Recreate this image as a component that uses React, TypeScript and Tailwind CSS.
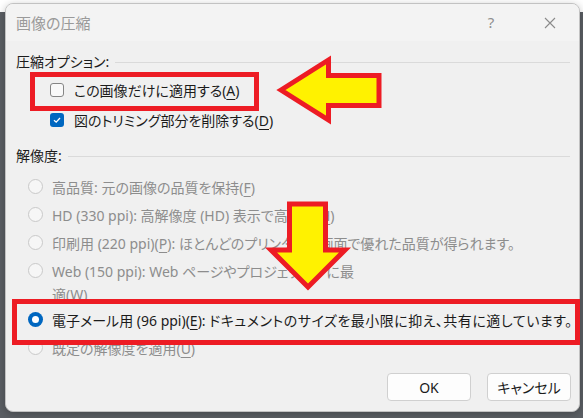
import React from 'react';

const font = "font-['Noto_Sans','Noto_Sans_CJK_JP',sans-serif] [font-feature-settings:'palt']";

const Key = ({ children }: { children: React.ReactNode }) => (
  <span className="underline underline-offset-[3px] decoration-1">{children}</span>
);

const GroupLabel = ({ children }: { children: React.ReactNode }) => (
  <div className="flex items-center h-[20px] pl-[10px] pr-[9px]">
    <span className="text-[14px] leading-[20px] text-[#1b1b1b]">{children}</span>
    <div className="flex-1 h-px bg-[#dadada] ml-[6px]" />
  </div>
);

const Checkbox = ({ checked }: { checked?: boolean }) =>
  checked ? (
    <span className="w-[14px] h-[14px] rounded-[3px] bg-[#0067c0] flex items-center justify-center shrink-0">
      <svg width="10" height="10" viewBox="0 0 10 10">
        <polyline points="2,5.2 4.2,7.2 8,3" fill="none" stroke="#fff" strokeWidth="1.3" />
      </svg>
    </span>
  ) : (
    <span className="w-[14px] h-[14px] rounded-[3px] border border-[#858585] bg-[#f9f9f9] shrink-0" />
  );

const Radio = ({ selected }: { selected?: boolean }) =>
  selected ? (
    <span className="w-[15px] h-[15px] rounded-full bg-[#0067c0] flex items-center justify-center shrink-0">
      <span className="w-[7px] h-[7px] rounded-full bg-white" />
    </span>
  ) : (
    <span className="w-[15px] h-[15px] rounded-full border border-[#c9c9c9] bg-[#f6f6f6] shrink-0" />
  );

const RadioRow = ({ selected, children }: { selected?: boolean; children: React.ReactNode }) => (
  <div className="flex items-start pl-[22px] min-h-[28px] pt-[6.5px]">
    <Radio selected={selected} />
    <span
      className={
        'ml-[9px] -mt-[3px] text-[14px] leading-[23px] whitespace-nowrap ' +
        (selected ? 'text-[#1b1b1b]' : 'text-[#8d8d8d]')
      }
    >
      {children}
    </span>
  </div>
);

export default function App() {
  return (
    <div
      className={`relative w-[583px] h-[418px] overflow-hidden bg-[linear-gradient(to_bottom,#ffffff_0px,#ffffff_12px,#5b5f64_12px)] pt-[3px] pl-[5px] ${font}`}
    >
      <div className="w-[575px] h-[409px] rounded-[8px] border border-[#c2c2c2] shadow-[0_2px_8px_rgba(0,0,0,0.25)] overflow-hidden flex flex-col bg-[#f0f0f0]">
        {/* title bar */}
        <div className="h-[37px] bg-[#f3f3f3] flex items-center pl-[10px] pr-[9px]">
          <span className="text-[15px] text-[#9a9a9a] mt-[2px]">画像の圧縮</span>
          <div className="ml-auto flex items-center">
            <span className="w-[40px] text-center text-[15px] text-[#8f8f8f]">?</span>
            <span className="w-[40px] ml-[19px] flex justify-center">
              <svg width="12" height="12" viewBox="0 0 12 12">
                <path d="M1 1L11 11M11 1L1 11" stroke="#8a8a8a" strokeWidth="1.1" />
              </svg>
            </span>
          </div>
        </div>

        {/* body */}
        <div className="flex-1 flex flex-col pt-[11px]">
          <GroupLabel>圧縮オプション:</GroupLabel>
          <div className="mt-[3px] flex items-center h-[30px] pl-[44px] gap-[10px] text-[14px] text-[#1b1b1b]">
            <Checkbox />
            <span>
              この画像だけに適用する(<Key>A</Key>)
            </span>
          </div>
          <div className="flex items-center h-[30px] pl-[44px] gap-[10px] text-[14px] text-[#1b1b1b]">
            <Checkbox checked />
            <span>
              図のトリミング部分を削除する(<Key>D</Key>)
            </span>
          </div>

          <div className="mt-[11px]">
            <GroupLabel>解像度:</GroupLabel>
          </div>

          <div className="mt-[6px] flex flex-col">
            <RadioRow>
              高品質: 元の画像の品質を保持(<Key>F</Key>)
            </RadioRow>
            <RadioRow>
              HD (330 ppi): 高解像度 (HD) 表示で高品質(<Key>H</Key>)
            </RadioRow>
            <RadioRow>
              印刷用 (220 ppi)(<Key>P</Key>): ほとんどのプリンターと画面で優れた品質が得られます。
            </RadioRow>
            <div className="h-[49px]">
              <RadioRow>
                Web (150 ppi): Web ページやプロジェクターに最
                <br />
                適(<Key>W</Key>)
              </RadioRow>
            </div>
            <RadioRow selected>
              電子メール用 (96 ppi)(<Key>E</Key>):{' '}
              <span className="tracking-[0.5px]">ドキュメントのサイズを最小限に抑え、共有に適しています。</span>
            </RadioRow>
            <RadioRow>
              既定の解像度を適用(<Key>U</Key>)
            </RadioRow>
          </div>

          <div className="mt-auto flex justify-end gap-[16px] pr-[8px] pb-[10px]">
            <button className="w-[84px] h-[28px] rounded-[4px] border border-[#d0d0d0] bg-[#fdfdfd] text-[14px] text-[#1b1b1b]">
              OK
            </button>
            <button className="w-[84px] h-[28px] rounded-[4px] border border-[#d0d0d0] bg-[#fdfdfd] text-[14px] text-[#1b1b1b]">
              キャンセル
            </button>
          </div>
        </div>
      </div>

      {/* annotations */}
      <div className="absolute left-[30px] top-[72px] w-[229px] h-[39px] border-[5px] border-[#ed1c24]" />
      <div className="absolute left-[12px] top-[299px] w-[568px] h-[46px] border-[5px] border-[#ed1c24]" />
      <svg className="absolute left-0 top-0" width="583" height="418" viewBox="0 0 583 418">
        <polygon
          points="281,90 328.5,60 328.5,75.5 379,75.5 379,105.5 328.5,105.5 328.5,120"
          fill="#fff200"
          stroke="#ed1c24"
          strokeWidth="5"
        />
        <polygon
          points="289.5,204 325.5,204 325.5,250 345,250 308,287 271,250 289.5,250"
          fill="#fff200"
          stroke="#ed1c24"
          strokeWidth="5"
        />
      </svg>
    </div>
  );
}
